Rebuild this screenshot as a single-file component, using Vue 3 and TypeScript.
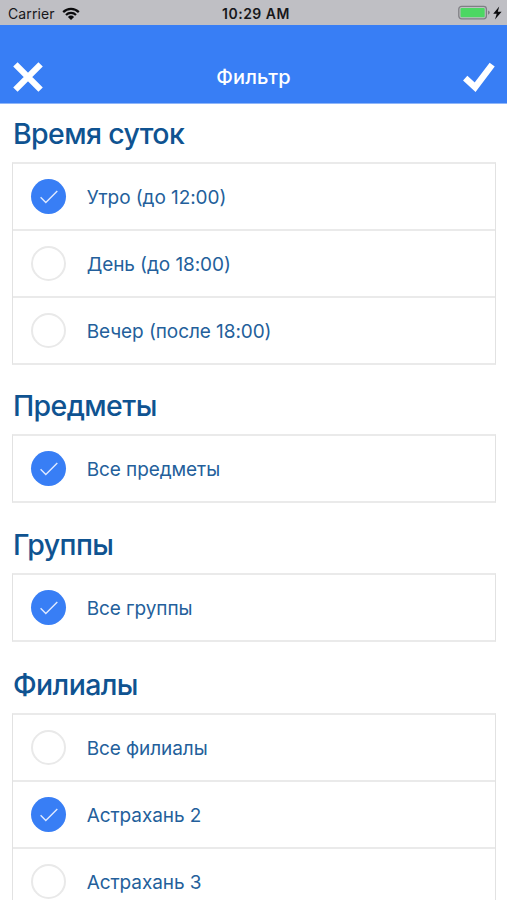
<script setup lang="ts">
import { ref } from 'vue'

interface Option {
  label: string
  checked: boolean
}

interface Section {
  id: string
  title: string
  options: Option[]
}

const sections = ref<Section[]>([
  {
    id: 'time',
    title: 'Время суток',
    options: [
      { label: 'Утро (до 12:00)', checked: true },
      { label: 'День (до 18:00)', checked: false },
      { label: 'Вечер (после 18:00)', checked: false },
    ],
  },
  { id: 'subjects', title: 'Предметы', options: [{ label: 'Все предметы', checked: true }] },
  { id: 'groups', title: 'Группы', options: [{ label: 'Все группы', checked: true }] },
  {
    id: 'branches',
    title: 'Филиалы',
    options: [
      { label: 'Все филиалы', checked: false },
      { label: 'Астрахань 2', checked: true },
      { label: 'Астрахань 3', checked: false },
    ],
  },
])
</script>

<template>
  <div class="screen">
    <div class="status">
      <div class="carrier">
        <span>Carrier</span>
        <svg class="wifi" viewBox="0 0 18 13" width="18" height="13">
          <path d="M1.2 5.1a11 11 0 0 1 15.6 0M4 8a7.1 7.1 0 0 1 10 0" fill="none" stroke="#0b0b0d" stroke-width="2.2" />
          <path d="M5.9 9.9a4.4 4.4 0 0 1 6.2 0L9 13z" fill="#0b0b0d" />
        </svg>
      </div>
      <span class="clock">10:29 AM</span>
      <div class="power">
        <svg viewBox="0 0 44 16" width="44" height="16">
          <rect x=".8" y="1.3" width="27.6" height="12.6" rx="2.8" fill="none" stroke="#7f7f84" stroke-width="1.3" />
          <rect x="2.5" y="3" width="24.2" height="9.2" rx="1" fill="#4cd763" />
          <path d="M30 5.4q1.8.6 1.8 2.2T30 9.8z" fill="#7f7f84" />
          <path d="M41.2 1.6 35.2 8.7h3.5L37 14.4l6.6-7.7h-3.8z" fill="#0b0b0d" />
        </svg>
      </div>
    </div>

    <header class="bar">
      <button class="action" type="button" aria-label="Закрыть">
        <svg viewBox="0 0 32 32" width="32" height="32">
          <path d="M3.4 3.4 28.6 28.6M28.6 3.4 3.4 28.6" fill="none" stroke="#fff" stroke-width="6.2" />
        </svg>
      </button>
      <h1>Фильтр</h1>
      <button class="action" type="button" aria-label="Применить">
        <svg viewBox="0 0 32 32" width="32" height="32">
          <path d="M2.2 17.2 12.1 26.2 29.2 3.6" fill="none" stroke="#fff" stroke-width="6.4" />
        </svg>
      </button>
    </header>

    <main>
      <section v-for="section in sections" :key="section.id">
        <h2>{{ section.title }}</h2>
        <ul>
          <li v-for="option in section.options" :key="option.label" @click="option.checked = !option.checked">
            <span class="mark" :class="{ on: option.checked }">
              <svg v-if="option.checked" viewBox="0 0 20 16" width="20" height="16">
                <path d="M1.6 8.3 6.8 13.6 18.3 2" fill="none" stroke="#dfeaff" stroke-width="1.4" />
              </svg>
            </span>
            <span class="label">{{ option.label }}</span>
          </li>
        </ul>
      </section>
    </main>
  </div>
</template>

<style>
body {
  background: #fff;
  overflow: hidden;
}
</style>

<style scoped>
.screen {
  height: 900px;
  overflow: hidden;
  background: #fff;
  font-family: Inter, "Noto Sans", sans-serif;
}
.status {
  display: grid;
  grid-template-columns: 1fr auto 1fr;
  align-items: center;
  box-sizing: border-box;
  height: 25px;
  padding: 2px 5px 0 8px;
  background: #bfbfc4;
  color: #17171a;
  font-size: 14px;
}
.carrier {
  display: flex;
  align-items: center;
  gap: 7px;
  letter-spacing: 0.1px;
}
.clock {
  padding-left: 2px;
  font-weight: 600;
  letter-spacing: 0.5px;
}
.power {
  display: flex;
  justify-content: flex-end;
}
.power svg {
  position: relative;
  top: -1px;
}
.bar {
  display: flex;
  justify-content: space-between;
  align-items: center;
  box-sizing: border-box;
  height: 79px;
  padding: 25px 12px 0;
  background: #387ef5;
  border-bottom: 1px solid #8fb6f9;
}
.action {
  display: flex;
  padding: 0;
  border: 0;
  background: none;
}
h1 {
  margin: 0;
  color: #fff;
  font-size: 20px;
  font-weight: 500;
  letter-spacing: 0.15px;
}
section {
  padding: 0 11px 0 12px;
}
h2 {
  display: flex;
  align-items: center;
  height: 58px;
  margin: 0;
  padding: 1px 0 0 1px;
  box-sizing: border-box;
  color: #0f5391;
  font-size: 28.5px;
  font-weight: 500;
  letter-spacing: -0.62px;
}
section + section {
  padding-top: 12px;
}
section:nth-child(2) {
  padding-top: 11px;
}
ul {
  margin: 0;
  padding: 0;
  list-style: none;
  border: solid #eaeaea;
  border-width: 2px 1px;
  border-left-color: #e2e2e2;
  border-right-color: #e2e2e2;
}
li {
  display: flex;
  align-items: center;
  box-sizing: border-box;
  height: 65px;
  padding-left: 18px;
}
li + li {
  height: 67px;
  border-top: 2px solid #eaeaea;
}
section:last-child {
  padding-top: 13px;
}
.mark {
  display: flex;
  flex: none;
  align-items: center;
  justify-content: center;
  box-sizing: border-box;
  width: 35px;
  height: 35px;
  border: 2px solid #e9e9e9;
  border-radius: 50%;
}
.mark.on {
  border: 0;
  background: #387ef5;
}
.label {
  margin-left: 20.7px;
  padding-top: 1px;
  color: #245f9b;
  font-size: 19px;
  letter-spacing: -0.08px;
}
</style>
